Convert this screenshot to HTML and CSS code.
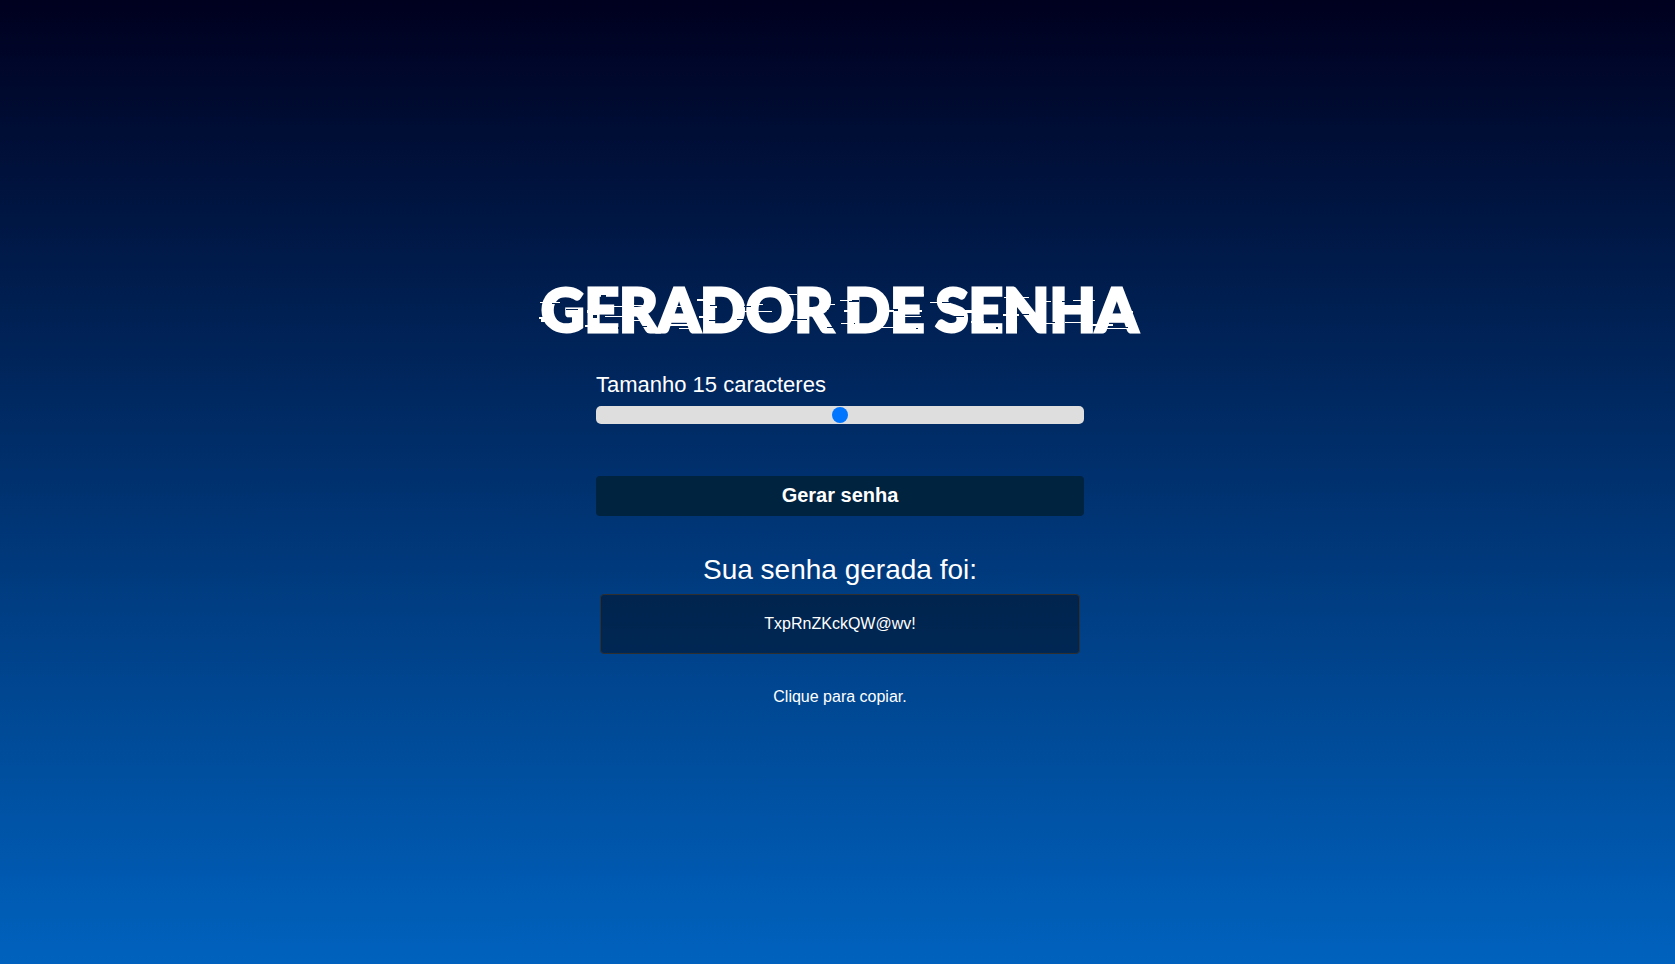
FILE: index.html
```html
<!DOCTYPE html>
<html lang="pt-BR">
<head>
<meta charset="utf-8">
<meta name="viewport" content="width=device-width, initial-scale=1">
<title>Gerador de senha</title>
<link rel="stylesheet" href="styles.css">
</head>
<body>
<main class="page">
  <h1 class="logo">
    <span>GERADOR</span> <span>DE</span> <span>SENHA</span>
    <svg class="glitch" viewBox="0 0 602 50" aria-hidden="true">
      <path class="cut" d="M62 9h5v2h-5zM13 17h9v1h-9zM27 23h12v1H27zM54 29h4v3h-4zM79 41h2v2h-2zM95 17h8v1h-8zM116 22h9v1h-9zM98 40h10v1H98zM132 39h12v1h-12zM149 42h12v1h-12zM171 19h9v2h-9zM170 34h8v1h-8zM205 20h7v1h-7zM198 33h8v1h-8zM227 24h14v1h-14zM256 33h12v1h-12zM288 24h8v1h-8zM288 41h8v1h-8zM310 14h10v2h-10zM307 37h9v1h-9zM377 42h2v1h-2zM354 23h5v2h-5zM399 16h12v1h-12zM415 30h10v1h-10zM457 41h2v2h-2zM480 28h10v1h-10zM508 36h8v1h-8zM523 15h10v1h-10zM558 39h13v1h-13zM577 41h12v1h-12z"/>
      <path class="shift" d="M1 16h20v1H1zM0 31h15v2H0zM2 33h14v3H2zM50 8h10v2H50zM48 24h16v3H48zM46 39h14v2H46zM66 20h18v1H66zM66 30h20v1H66zM90 19h18v1H90zM93 34h14v1H93zM129 20h14v1h-14zM128 38h30v2h-30zM140 42h22v1h-22zM158 13h10v2h-10zM166 20h12v2h-12zM160 30h12v2h-12zM197 25h14v1h-14zM192 34h10v1h-10zM211 25h22v1h-22zM214 18h10v1h-10zM248 8h10v1h-10zM252 34h18v1h-18zM286 18h10v1h-10zM301 14h12v1h-12zM305 24h10v2h-10zM302 37h13v1h-13zM345 24h10v2h-10zM340 41h18v1h-18zM377 8h8v2h-8zM375 24h8v2h-8zM366 30h16v1h-16zM391 16h12v1h-12zM397 38h6v2h-6zM426 24h14v3h-14zM432 35h13v2h-13zM465 11h25v1h-25zM464 28h16v2h-16zM500 15h12v1h-12zM502 37h14v1h-14zM526 36h18v1h-18zM534 14h22v1h-22zM533 24h14v3h-14zM552 38h22v2h-22zM560 42h36v1h-36zM588 25h6v2h-6z"/>
    </svg>
  </h1>
  <div class="field">
    <label for="size">Tamanho 15 caracteres</label>
    <input class="slider" id="size" type="range" min="5" max="25" value="15">
    <button class="generate" type="button">Gerar senha</button>
  </div>
  <section class="result">
    <p class="caption">Sua senha gerada foi:</p>
    <button class="password" type="button">TxpRnZKckQW@wv!</button>
    <p class="hint">Clique para copiar.</p>
  </section>
</main>
</body>
</html>
```
FILE: styles.css
```css
* { box-sizing: border-box; }
body {
  margin: 0;
  min-height: 100vh;
  display: flex;
  align-items: center;
  justify-content: center;
  padding: 12px 0 0 5px;
  background: linear-gradient(#00001f, #0062be);
  color: #fff;
  font-family: "Liberation Sans", Arial, sans-serif;
}
.page {
  width: 100%;
  max-width: 602px;
  display: flex;
  flex-direction: column;
  align-items: center;
}
.logo {
  position: relative;
  width: 100%;
  display: flex;
  justify-content: space-between;
  margin: 0;
  padding: 0 3px 0 2px;
  font: 900 60px/80px Lato, sans-serif;
  -webkit-text-stroke: 3px #fff;
}
.glitch {
  position: absolute;
  inset: 17px 0 auto;
  width: 100%;
}
.cut { fill: #00204f; }
.shift { fill: #fff; }
.field {
  width: 100%;
  max-width: 488px;
  display: flex;
  flex-direction: column;
  margin-top: 22px;
}
.field label {
  font-size: 22px;
  line-height: 28px;
}
.slider {
  appearance: none;
  width: 100%;
  height: 18px;
  margin: 7px 0 52px;
  border-radius: 5px;
  background: #dedede;
}
.slider::-webkit-slider-thumb {
  appearance: none;
  width: 16px;
  height: 16px;
  border-radius: 50%;
  background: #0075ff;
}
.generate {
  height: 40px;
  padding: 0 0 2px;
  border: 0;
  border-radius: 4px;
  background: #002340;
  color: #fff;
  font: bold 20px "Liberation Sans", Arial, sans-serif;
}
.result {
  width: 100%;
  max-width: 480px;
  margin-top: 37px;
  text-align: center;
}
.caption {
  margin: 0 0 7px;
  font-size: 28px;
  line-height: 34px;
}
.password {
  width: 100%;
  height: 60px;
  padding: 0 0 1px;
  border: 1px solid #2f2f2f;
  border-radius: 4px;
  background: rgba(0, 0, 0, 0.4);
  color: #fff;
  font: 16px "Liberation Sans", Arial, sans-serif;
}
.hint {
  margin: 33px 0 0;
  font-size: 16px;
  line-height: 20px;
}
```
